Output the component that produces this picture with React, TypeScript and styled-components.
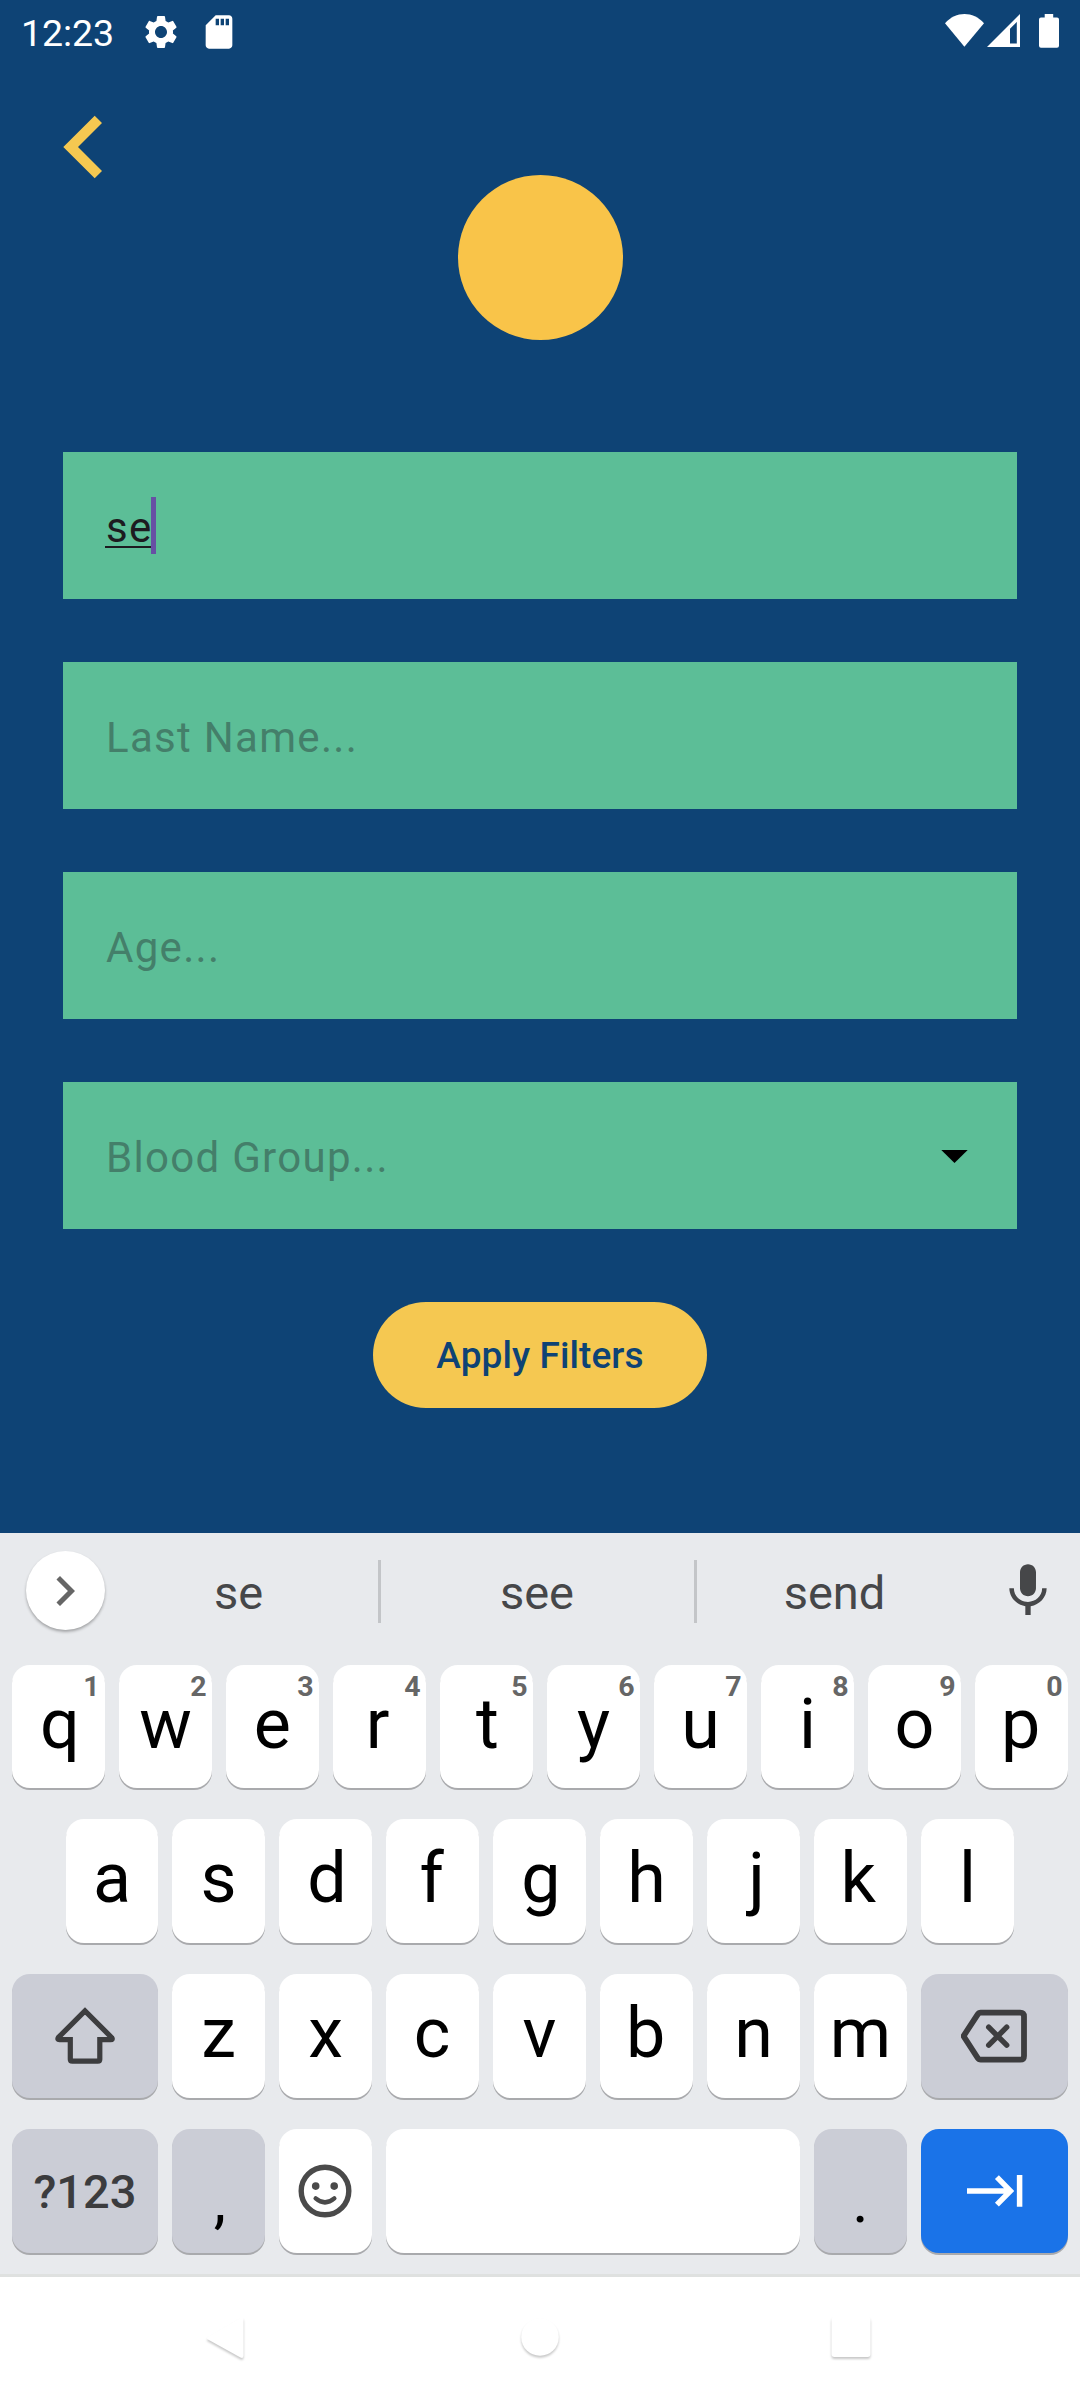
import React from "react";
import styled, { createGlobalStyle } from "styled-components";
import { MdSdCard, MdSettings } from "react-icons/md";

const GlobalStyle = createGlobalStyle`
  *, *::before, *::after { box-sizing: border-box; }
  body { margin: 0; background: #ffffff; }
`;

const Phone = styled.div`
  display: flex;
  flex-direction: column;
  width: 1080px;
  height: 2400px;
  overflow: hidden;
  font-family: Roboto, "Noto Sans", sans-serif;
  background: #0e4375;
`;

const StatusBar = styled.header`
  display: flex;
  align-items: center;
  justify-content: space-between;
  height: 63px;
  padding: 0 21px 0 21px;
  color: #ffffff;
`;

const StatusGroup = styled.div`
  display: flex;
  align-items: center;
`;

const Clock = styled.span`
  width: 120px;
  padding-top: 3px;
  font-size: 37.5px;
  line-height: 60px;
  letter-spacing: -0.1px;
`;

const SettingsIcon = styled(MdSettings)`
  width: 40px;
  height: 40px;
  margin-right: 18px;
`;

const CardIcon = styled(MdSdCard)`
  width: 40px;
  height: 40px;
`;

const Screen = styled.main`
  display: flex;
  flex-direction: column;
  align-items: center;
  height: 1470px;
  padding: 52px 63px 0;
`;

const BackButton = styled.button`
  align-self: flex-start;
  display: flex;
  width: 40px;
  height: 60px;
  padding: 0;
  border: 0;
  background: none;
  overflow: visible;

  svg { flex: none; }
`;

const Avatar = styled.div`
  width: 165px;
  height: 165px;
  border-radius: 50%;
  background: #f9c449;
`;

const Form = styled.div`
  display: flex;
  flex-direction: column;
  gap: 63px;
  width: 100%;
  margin-top: 112px;
`;

const Field = styled.div`
  display: flex;
  align-items: center;
  justify-content: space-between;
  height: 147px;
  padding: 0 49px 0 42px;
  background: #5cbe97;
`;

const Placeholder = styled.span`
  padding: 4px 0 0 1px;
  font-size: 42px;
  line-height: 60px;
  letter-spacing: 1.3px;
  color: #447f6a;
`;

const Arrow = styled.svg`
  margin-top: 2px;
`;

const Entry = styled.span`
  display: flex;
  align-items: center;
`;

const Typed = styled.span`
  display: block;
  width: 47px;
  height: 46px;
  margin-top: -2px;
  padding-left: 1px;
  border-bottom: 2px solid #1d1b20;
  font-size: 42px;
  line-height: 51px;
  letter-spacing: 1.3px;
  color: #1d1b20;
`;

const Caret = styled.i`
  width: 5px;
  height: 57px;
  margin-left: -1px;
  background: #6750a4;
`;

const ApplyButton = styled.button`
  display: flex;
  align-items: center;
  justify-content: center;
  width: 334px;
  height: 106px;
  margin-top: 73px;
  padding: 2px 0 0;
  border: 0;
  border-radius: 53px;
  background: #f5c851;
  font: 500 37px/60px Roboto, "Noto Sans", sans-serif;
  letter-spacing: 0.1px;
  color: #0e4375;
`;

const Keyboard = styled.section`
  display: flex;
  flex-direction: column;
  height: 744px;
  border-bottom: 3px solid #dfe1e0;
  background: #e8eaed;
`;

const Suggestions = styled.div`
  display: flex;
  align-items: center;
  height: 132px;
  padding: 0 20px 17px 26px;
`;

const ExpandButton = styled.div`
  display: flex;
  align-items: center;
  justify-content: center;
  width: 79px;
  height: 79px;
  padding-right: 2px;
  border-radius: 50%;
  background: #ffffff;
  box-shadow: 0 2px 3px rgba(0, 0, 0, 0.3);
`;

const Word = styled.span<{ $width: number; $trim?: number }>`
  width: ${(p) => p.$width}px;
  padding-right: ${(p) => p.$trim ?? 0}px;
  padding-top: 4px;
  text-align: center;
  font-size: 47px;
  line-height: 60px;
  color: #464749;
`;

const Divider = styled.i`
  width: 3px;
  height: 63px;
  margin-bottom: -1px;
  background: #c3c5c8;
`;

const MicSlot = styled.div`
  display: flex;
  margin-left: auto;
`;

const Rows = styled.div`
  display: flex;
  flex-direction: column;
  gap: 31px;
  padding: 0 12px;
`;

const Row = styled.div<{ $inset?: boolean }>`
  display: flex;
  gap: 14px;
  padding: ${(p) => (p.$inset ? "0 54px" : "0")};
`;

type Tone = "light" | "grey" | "blue";
const tones: Record<Tone, string> = { light: "#ffffff", grey: "#cbcdd6", blue: "#1a73e8" };

const Key = styled.div<{ $tone?: Tone; $width?: number; $short?: boolean }>`
  position: relative;
  display: flex;
  align-items: center;
  justify-content: center;
  flex: none;
  width: ${(p) => p.$width ?? 93}px;
  height: ${(p) => (p.$short ? 123 : 124)}px;
  border-radius: 18px;
  background: ${(p) => tones[p.$tone ?? "light"]};
  box-shadow: 0 2px 0 #a9aaad;
`;

const Letter = styled.span<{ $nudge?: number }>`
  padding-bottom: 6px;
  font-size: 70px;
  line-height: 100px;
  color: #000000;
  transform: translateX(${(p) => p.$nudge ?? 0}px);
`;

const Punctuation = styled.span<{ $nudge?: number }>`
  padding-top: 20px;
  font-size: 62px;
  line-height: 80px;
  color: #000000;
  transform: translateX(${(p) => p.$nudge ?? 0}px);
`;

const Hint = styled.span`
  position: absolute;
  top: 6px;
  right: 5.5px;
  font-size: 28.5px;
  font-weight: 700;
  line-height: 32px;
  color: #666666;
`;

const SymbolLabel = styled.span`
  font-size: 47px;
  font-weight: 500;
  line-height: 60px;
  padding-top: 1px;
  color: #3c3c3e;
`;

const NavBar = styled.nav`
  display: flex;
  justify-content: space-between;
  height: 123px;
  padding: 30px 199px 0 193px;
  background: #ffffff;
`;

const NavIcon = styled.svg`
  width: 60px;
  height: 60px;
  fill: #ffffff;
  filter: drop-shadow(0 2px 1px rgba(0, 0, 0, 0.22));
`;

const topRow = "qwertyuiop";
const topHints = "1234567890";

const opticalNudge: Record<string, number> = {
  q: 1.5, r: -1.9, t: 0.9, e: -0.3, d: 1.5, f: -0.8, g: 1.4,
  j: 3, k: -2.2, b: -0.8, p: -0.8, c: -0.3,
};

const SystemIcons = () => (
  <svg width="114" height="40" viewBox="945 12 114 40" fill="#fff">
    <path d="M964.4 46.7 945 23.2C956 11 973 11 984 23.2Z" />
    <path fillRule="evenodd" d="M987 47 1020 14V47ZM1010 28.7V43.4H1016.8V22Z" />
    <path d="M1044.7 14H1053.2V17.4H1057A2 2 0 0 1 1059 19.4V45.7A2 2 0 0 1 1057 47.7H1041A2 2 0 0 1 1039 45.7V19.4A2 2 0 0 1 1041 17.4H1044.7Z" />
  </svg>
);

const ShiftIcon = () => (
  <svg width="60" height="60" viewBox="55 2006 60 60" fill="none" stroke="#3d3d3f" strokeWidth="5.2">
    <path d="M85 2010.9 58.4 2037.5Q57 2039.7 59.4 2039.7H70.3V2059.2Q70.3 2061.2 72.3 2061.2H97.8Q99.8 2061.2 99.8 2059.2V2039.7H110.6Q113.2 2039.7 111.7 2037.6Z" />
  </svg>
);

const DeleteIcon = () => (
  <svg width="68" height="54" viewBox="960.8 2011.5 68 54" fill="none" stroke="#3d3d3f" strokeWidth="5.8">
    <path d="M963.3 2038.6 977.5 2016.8Q978.6 2015.1 980.5 2015.1H1020Q1023.8 2015.1 1023.8 2018.9V2058.4Q1023.8 2062.2 1020 2062.2H980.5Q978.6 2062.2 977.5 2060.5Z" />
    <path strokeWidth="5.4" strokeLinecap="round" d="M988.5 2029.7 1006.5 2047.7M1006.5 2029.7 988.5 2047.7" />
  </svg>
);

const SmileIcon = () => (
  <svg width="55" height="54" viewBox="0 0 55 54">
    <circle cx="27" cy="27" r="23.8" fill="none" stroke="#4a4a4a" strokeWidth="5.4" />
    <circle cx="17.7" cy="22.1" r="3.8" fill="#4a4a4a" />
    <circle cx="36.2" cy="22.1" r="3.8" fill="#4a4a4a" />
    <path d="M17.7 34.4Q27 42.4 36.3 34.4" fill="none" stroke="#4a4a4a" strokeWidth="4.5" strokeLinecap="round" />
  </svg>
);

const NextFieldIcon = () => (
  <svg width="56" height="34" viewBox="966.7 2173.7 56 34" fill="none" stroke="#fff" strokeWidth="5.5">
    <path d="M966.7 2190.6H1010M996.6 2176.8 1010.1 2190.6 996.6 2204.4M1019.3 2174.8V2206.5" />
  </svg>
);

export default function App() {
  return (
    <>
      <GlobalStyle />
      <Phone>
        <StatusBar>
          <StatusGroup>
            <Clock>12:23</Clock>
            <SettingsIcon />
            <CardIcon />
          </StatusGroup>
          <SystemIcons />
        </StatusBar>

        <Screen>
          <BackButton aria-label="Back">
            <svg width="40" height="64" viewBox="63 115 40 64" fill="#f5c851">
              <path d="M63.3 147 94.7 115.7 102 123 78 147 102 171 94.7 178.3Z" />
            </svg>
          </BackButton>
          <Avatar />
          <Form>
            <Field>
              <Entry>
                <Typed>se</Typed>
                <Caret />
              </Entry>
            </Field>
            <Field>
              <Placeholder>Last Name...</Placeholder>
            </Field>
            <Field>
              <Placeholder>Age...</Placeholder>
            </Field>
            <Field>
              <Placeholder>Blood Group...</Placeholder>
              <Arrow width="27" height="13" viewBox="0 0 27 13">
                <path d="M0.3 0H26.7L13.5 13Z" />
              </Arrow>
            </Field>
          </Form>
          <ApplyButton>Apply Filters</ApplyButton>
        </Screen>

        <Keyboard>
          <Suggestions>
            <ExpandButton>
              <svg width="60" height="60" viewBox="0 0 24 24" fill="#666">
                <path d="M10 6 8.59 7.41 13.17 12l-4.58 4.59L10 18l6-6z" />
              </svg>
            </ExpandButton>
            <Word $width={273} $trim={6}>se</Word>
            <Divider />
            <Word $width={313} $trim={1}>see</Word>
            <Divider />
            <Word $width={275}>send</Word>
            <MicSlot>
              <svg width="64" height="64" viewBox="0 0 24 24" fill="#464749">
                <path d="M12 14c1.66 0 2.99-1.34 2.99-3L15 5c0-1.66-1.34-3-3-3S9 3.34 9 5v6c0 1.66 1.34 3 3 3zm5.3-3c0 3-2.54 5.1-5.3 5.1S6.7 14 6.7 11H5c0 3.41 2.72 6.23 6 6.72V21h2v-3.28c3.28-.48 6-3.3 6-6.72h-1.7z" />
              </svg>
            </MicSlot>
          </Suggestions>
          <Rows>
            <Row>
              {topRow.split("").map((c, i) => (
                <Key key={c} $short>
                  <Letter $nudge={opticalNudge[c]}>{c}</Letter>
                  <Hint>{topHints[i]}</Hint>
                </Key>
              ))}
            </Row>
            <Row $inset>
              {"asdfghjkl".split("").map((c, i) => (
                <Key key={c} $width={i === 0 ? 92 : 93}>
                  <Letter $nudge={opticalNudge[c]}>{c}</Letter>
                </Key>
              ))}
            </Row>
            <Row>
              <Key $tone="grey" $width={146}>
                <ShiftIcon />
              </Key>
              {"zxcvbnm".split("").map((c) => (
                <Key key={c}>
                  <Letter $nudge={opticalNudge[c]}>{c}</Letter>
                </Key>
              ))}
              <Key $tone="grey" $width={147}>
                <DeleteIcon />
              </Key>
            </Row>
            <Row>
              <Key $tone="grey" $width={146}>
                <SymbolLabel>?123</SymbolLabel>
              </Key>
              <Key $tone="grey">
                <Punctuation $nudge={1.3}>,</Punctuation>
              </Key>
              <Key>
                <SmileIcon />
              </Key>
              <Key $width={414} />
              <Key $tone="grey">
                <Punctuation>.</Punctuation>
              </Key>
              <Key $tone="blue" $width={147}>
                <NextFieldIcon />
              </Key>
            </Row>
          </Rows>
        </Keyboard>

        <NavBar>
          <NavIcon viewBox="193 2307 60 60">
            <path d="M208 2337 240.5 2318Q243.5 2316.5 243.5 2319.5V2355.5Q243.5 2359 240.5 2357.5L208 2339.5Q206 2338 208 2337Z" />
          </NavIcon>
          <NavIcon viewBox="507 2307 60 60">
            <circle cx="540" cy="2337" r="18.8" />
          </NavIcon>
          <NavIcon viewBox="821 2307 60 60">
            <rect x="831.5" y="2317" width="39" height="40" rx="3" />
          </NavIcon>
        </NavBar>
      </Phone>
    </>
  );
}
